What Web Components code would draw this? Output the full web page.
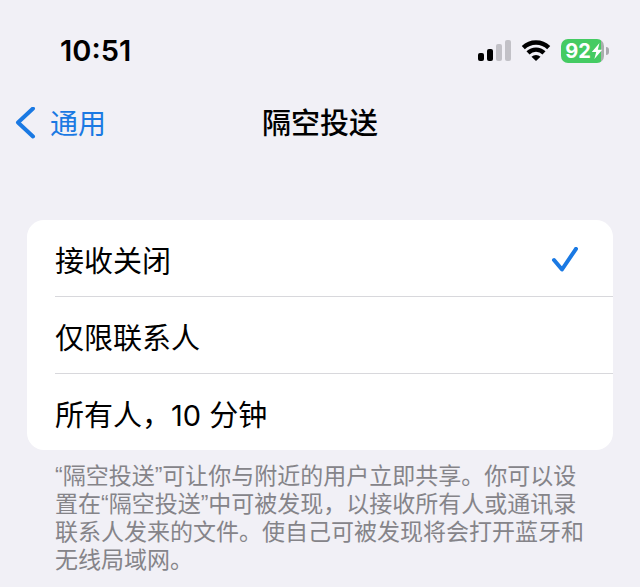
<!DOCTYPE html>
<html lang="zh-CN">
<head>
<meta charset="utf-8">
<meta name="viewport" content="width=device-width, initial-scale=1">
<title>隔空投送</title>
<style>
  body {
    background: #f1f0f6;
    color: #000;
    font-family: Inter, "Noto Sans CJK SC", sans-serif;
    margin: 0;
  }
</style>
</head>
<body>
<airdrop-settings></airdrop-settings>

<script>
const define = (name, html, setup) => {
  const tmpl = document.createElement('template');
  tmpl.innerHTML = html;

  customElements.define(name, class extends HTMLElement {
    constructor() {
      super();
      this.attachShadow({mode: 'open'});
      this.shadowRoot.appendChild(tmpl.content.cloneNode(true));
    }

    connectedCallback() {
      if(setup) setup(this, this.shadowRoot);
    }
  });
};

define('status-bar', `
  <style>
    :host {
      align-items: center;
      display: flex;
      justify-content: space-between;
      padding: 32px 31px 0 60px;
    }

    time {
      font-size: 29px;
      font-weight: 600;
      line-height: 38px;
    }

    .icons {
      align-items: center;
      display: flex;
      gap: 10px;
    }

    svg {
      display: block;
    }

    .battery {
      align-items: center;
      display: flex;
      gap: 2px;
    }

    .level {
      align-items: center;
      background: linear-gradient(90deg, #45cb63 92%, #a9afac 92%);
      border-radius: 7px;
      box-sizing: border-box;
      color: #fff;
      display: flex;
      font-size: 20px;
      font-weight: 700;
      height: 24px;
      justify-content: center;
      padding-left: 3px;
      width: 43px;
    }

    .cap {
      background: #a9a9ae;
      border-radius: 0 4px 4px 0;
      height: 8px;
      width: 3px;
    }
  </style>
  <time><slot></slot></time>
  <div class="icons">
    <svg width="33" height="22" viewBox="0 0 33 22" aria-hidden="true">
      <rect x="0" y="13" width="6" height="8" rx="2"/>
      <rect x="9" y="9" width="6" height="12" rx="2"/>
      <rect x="18" y="4" width="6" height="17" rx="2" fill="#c2c1c7"/>
      <rect x="27" y="0" width="6" height="21" rx="2" fill="#c2c1c7"/>
    </svg>
    <svg width="30" height="22" viewBox="0 0 30 22" aria-hidden="true">
      <g fill="none" stroke="#000" stroke-width="4.400">
        <path d="M2.300 7.700a18.200 18.200 0 0 1 25.400 0"/>
        <path d="M7 12.900a11.500 11.500 0 0 1 16 0"/>
      </g>
      <path d="M15 21l-4.500-4.300a6.500 6.500 0 0 1 9 0z"/>
    </svg>
    <div class="battery">
      <div class="level">
        <span>92</span>
        <svg width="12" height="18" viewBox="0 0 12 18" aria-hidden="true">
          <path d="M8.500 1L.8 10h4.400L3.400 17l7.800-9.200H6.800z" fill="#fff"/>
        </svg>
      </div>
      <div class="cap"></div>
    </div>
  </div>
`);

define('nav-bar', `
  <style>
    :host {
      align-items: center;
      display: grid;
      font-size: 29px;
      grid-template-columns: 1fr auto 1fr;
      line-height: 44px;
      padding: 32px 15px 0;
    }

    a {
      align-items: center;
      color: #1a79e3;
      display: flex;
      font-size: 28px;
      gap: 14px;
      text-decoration: none;
    }

    h1 {
      font-size: inherit;
      font-weight: 500;
      margin: 0;
    }
  </style>
  <a href="#general">
    <svg width="21" height="34" viewBox="0 0 21 34" aria-hidden="true">
      <path d="M18 1.500L3 15.500 18 29.500" fill="none" stroke="currentColor" stroke-width="4" stroke-linecap="round" stroke-linejoin="round"/>
    </svg>
    <slot name="back"></slot>
  </a>
  <h1><slot></slot></h1>
`);

define('option-row', `
  <style>
    :host {
      display: block;
      padding-left: 28px;
    }

    label {
      align-items: center;
      border-top: 1px solid #d8d8dc;
      cursor: pointer;
      display: flex;
      font-size: 29px;
      justify-content: space-between;
      line-height: 44px;
      padding: 20px 31px 12px 0;
    }

    :host(:first-of-type) label {
      border-top: 0;
    }

    input {
      appearance: none;
      height: 1px;
      margin: 0;
      order: 1;
      width: 1px;
    }

    span {
      flex: 1;
    }

    svg {
      visibility: hidden;
    }

    input:checked ~ svg {
      visibility: visible;
    }
  </style>
  <label>
    <input type="radio" name="receiving">
    <span><slot></slot></span>
    <svg width="30" height="30" viewBox="0 0 30 30" aria-hidden="true">
      <path d="M3 13l8 9.500L25 1.800" fill="none" stroke="#1a79e3" stroke-width="4" stroke-linecap="round" stroke-linejoin="round"/>
    </svg>
  </label>
`, (el, root) => {
  const input = root.querySelector('input');

  input.checked = el.hasAttribute('checked');
  // radios in separate shadow roots don't share a group
  input.addEventListener('change', () => {
    for(const row of el.parentNode.querySelectorAll('option-row')) {
      row.shadowRoot.querySelector('input').checked = row === el;
    }
  });
});

define('option-group', `
  <style>
    :host {
      display: block;
      padding: 74px 27px 0;
    }

    .card {
      background: #fff;
      border-radius: 17px;
      overflow: hidden;
    }

    .note {
      color: #858489;
      font-family: "Liberation Sans", "Noto Sans CJK SC", sans-serif;
      font-size: 23px;
      line-height: 28px;
      margin: 0;
      padding: 12px 0 10px 28px;
    }
  </style>
  <div class="card" role="radiogroup"><slot></slot></div>
  <p class="note"><slot name="note"></slot></p>
`);

define('airdrop-settings', `
  <style>
    :host {
      display: block;
    }
  </style>
  <status-bar>10:51</status-bar>
  <nav-bar><span slot="back">通用</span>隔空投送</nav-bar>
  <option-group>
    <option-row checked>接收关闭</option-row>
    <option-row>仅限联系人</option-row>
    <option-row>所有人，10 分钟</option-row>
    <span slot="note">“隔空投送”可让你与附近的用户立即共享。你可以设<br>置在“隔空投送”中可被发现，以接收所有人或通讯录<br>联系人发来的文件。使自己可被发现将会打开蓝牙和<br>无线局域网。</span>
  </option-group>
`);
</script>
</body>
</html>
